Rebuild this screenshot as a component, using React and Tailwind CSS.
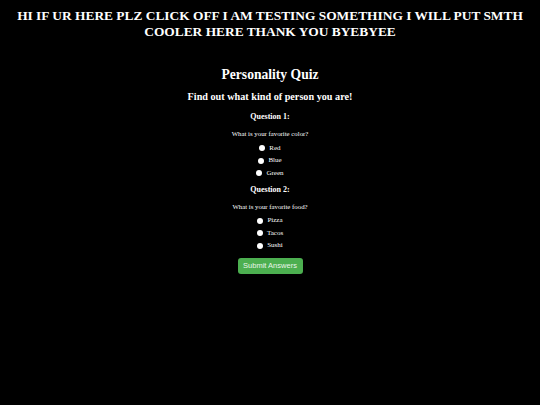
import React, { useState } from 'react';

const questions = [
    { id: 'q1', label: 'Question 1:', text: 'What is your favorite color?', options: ['Red', 'Blue', 'Green'] },
    { id: 'q2', label: 'Question 2:', text: 'What is your favorite food?', options: ['Pizza', 'Tacos', 'Sushi'] }
];

function Question({ q, value, onChange }) {
    return (
        <div className="flex flex-col items-center">
            <h3 className="text-[8px] font-bold leading-[12px] mt-[3px]">{q.label}</h3>
            <p className="text-[6.8px] leading-[9px] mt-[6px]">{q.text}</p>
            <div className="flex flex-col items-center gap-[3.5px] mt-[5.5px]">
                {q.options.map((opt) => (
                    <label key={opt} className="flex items-center gap-[4px] text-[7px] leading-[9px] cursor-pointer">
                        <input
                            type="radio"
                            name={q.id}
                            checked={value === opt}
                            onChange={() => onChange(opt)}
                            className="appearance-none w-[6px] h-[6px] rounded-full bg-white checked:bg-blue-500 m-0"
                        />
                        {opt}
                    </label>
                ))}
            </div>
        </div>
    );
}

export default function App() {
    const [answers, setAnswers] = useState({});

    return (
        <div className="min-h-[405px] w-full bg-black text-white font-['Liberation_Serif',serif] flex flex-col items-center">
            <h1 className="text-[13.4px] font-bold leading-[16px] text-center px-[10px] pt-[8px]">
                HI IF UR HERE PLZ CLICK OFF I AM TESTING SOMETHING I WILL PUT SMTH COOLER HERE THANK YOU BYEBYEE
            </h1>

            <h2 className="text-[13.6px] font-bold leading-[18px] mt-[26px]">Personality Quiz</h2>
            <p className="text-[10.2px] font-bold leading-[14px] mt-[6px]">Find out what kind of person you are!</p>

            <form className="flex flex-col items-center gap-[3px] mt-[4px]" onSubmit={(e) => e.preventDefault()}>
                {questions.map((q) => (
                    <Question
                        key={q.id}
                        q={q}
                        value={answers[q.id]}
                        onChange={(v) => setAnswers({ ...answers, [q.id]: v })}
                    />
                ))}
                <button
                    type="submit"
                    className="mt-[5px] w-[65px] h-[16px] bg-[#4caf50] rounded-[3px] text-[7.5px] text-[#e8f5e9] font-['Liberation_Sans',sans-serif] flex items-center justify-center"
                >
                    Submit Answers
                </button>
            </form>
        </div>
    );
}
